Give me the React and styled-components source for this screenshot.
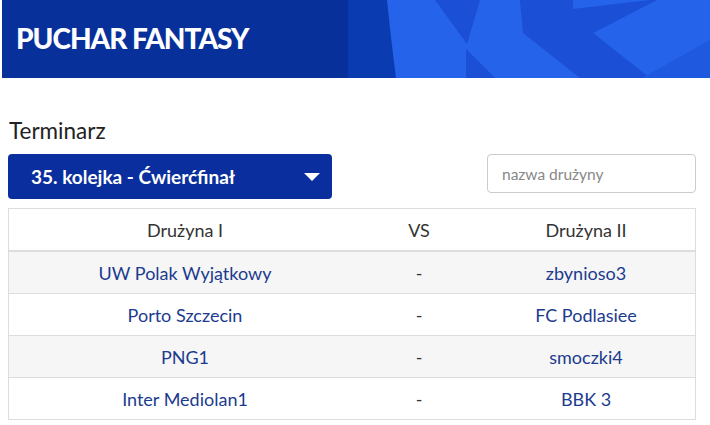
import React from "react";
import styled, { createGlobalStyle } from "styled-components";

const GlobalStyle = createGlobalStyle`
  body {
    margin: 0;
    background: #fff;
    font-family: Lato, "Open Sans", Arial, sans-serif;
  }
`;

const Banner = styled.header`
  position: relative;
  height: 78px;
  margin-left: 2px;
  background: #07309b;
  overflow: hidden;
`;

const BannerArt = styled.svg`
  position: absolute;
  top: 0;
  left: 0;
  width: 100%;
  height: 100%;
`;

const Title = styled.h1`
  position: relative;
  margin: 0;
  padding: 20px 0 0 14px;
  color: #fff;
  font-size: 28px;
  font-weight: 900;
  letter-spacing: -1px;
  line-height: 36px;
`;

const Content = styled.main`
  padding: 0 14px 0 8px;
`;

const Heading = styled.h2`
  margin: 39px 0 0 1px;
  font-size: 22.5px;
  font-weight: 400;
  line-height: 28px;
  color: #222;
`;

const Controls = styled.div`
  display: flex;
  justify-content: space-between;
  align-items: flex-start;
  margin-top: 9px;
`;

const Select = styled.button`
  display: flex;
  align-items: center;
  justify-content: space-between;
  width: 324px;
  height: 45px;
  padding: 0 12px 0 23px;
  border: 0;
  border-radius: 4px;
  background: #0a2e9d;
  color: #fff;
  font-family: inherit;
  font-size: 19px;
  font-weight: 700;
  cursor: pointer;
`;

const Caret = styled.span`
  width: 0;
  height: 0;
  border-left: 8px solid transparent;
  border-right: 8px solid transparent;
  border-top: 8px solid #fff;
`;

const Search = styled.input`
  box-sizing: border-box;
  width: 209px;
  height: 39px;
  padding: 0 14px;
  border: 1px solid #ccc;
  border-radius: 4px;
  font-family: inherit;
  font-size: 15.5px;
  color: #333;
  &::placeholder {
    color: #888;
  }
`;

const Table = styled.div`
  margin-top: 9px;
  border: 1px solid #ddd;
`;

const Row = styled.div`
  display: grid;
  grid-template-columns: 352px 116px 1fr;
  align-items: center;
  height: ${(p) => (p.$head ? "41px" : "41px")};
  background: ${(p) => (p.$striped ? "#f6f6f6" : "#fff")};
  border-top: ${(p) => (p.$head ? "0" : "1px solid #ddd")};
  border-bottom: ${(p) => (p.$head ? "2px solid #ddd" : "0")};
  &:nth-child(2) {
    border-top: 0;
  }
`;

const Cell = styled.div`
  text-align: center;
  font-size: 18px;
  color: ${(p) => (p.$link ? "#1c3b8e" : "#333")};
`;

const matches = [
  ["UW Polak Wyjątkowy", "zbynioso3"],
  ["Porto Szczecin", "FC Podlasiee"],
  ["PNG1", "smoczki4"],
  ["Inter Mediolan1", "BBK 3"],
];

export default function App() {
  return (
    <>
      <GlobalStyle />
      <Banner>
        <BannerArt viewBox="0 0 708 78" preserveAspectRatio="none">
          <rect x="346" y="0" width="362" height="78" fill="#0b3bb1" />
          <path d="M385 0 Q389 40 394 78 L708 78 L708 0 Z" fill="#2563eb" />
          <polygon points="433,0 478,0 465,44" fill="#1a4fd6" />
          <polygon points="464,49 493,78 464,78" fill="#1a4fd6" />
          <polygon
            points="518,0 655,0 591,33 648,78 578,78 521,33"
            fill="#1a4fd6"
          />
          <polygon points="571,0 648,0 571,9" fill="#2563eb" />
          <polygon points="640,78 708,40 708,78" fill="#1f59e0" />
        </BannerArt>
        <Title>PUCHAR FANTASY</Title>
      </Banner>
      <Content>
        <Heading>Terminarz</Heading>
        <Controls>
          <Select>
            35. kolejka - Ćwierćfinał
            <Caret />
          </Select>
          <Search placeholder="nazwa drużyny" />
        </Controls>
        <Table>
          <Row $head>
            <Cell>Drużyna I</Cell>
            <Cell>VS</Cell>
            <Cell>Drużyna II</Cell>
          </Row>
          {matches.map(([home, away], i) => (
            <Row key={home} $striped={i % 2 === 0}>
              <Cell $link>{home}</Cell>
              <Cell>-</Cell>
              <Cell $link>{away}</Cell>
            </Row>
          ))}
        </Table>
      </Content>
    </>
  );
}
